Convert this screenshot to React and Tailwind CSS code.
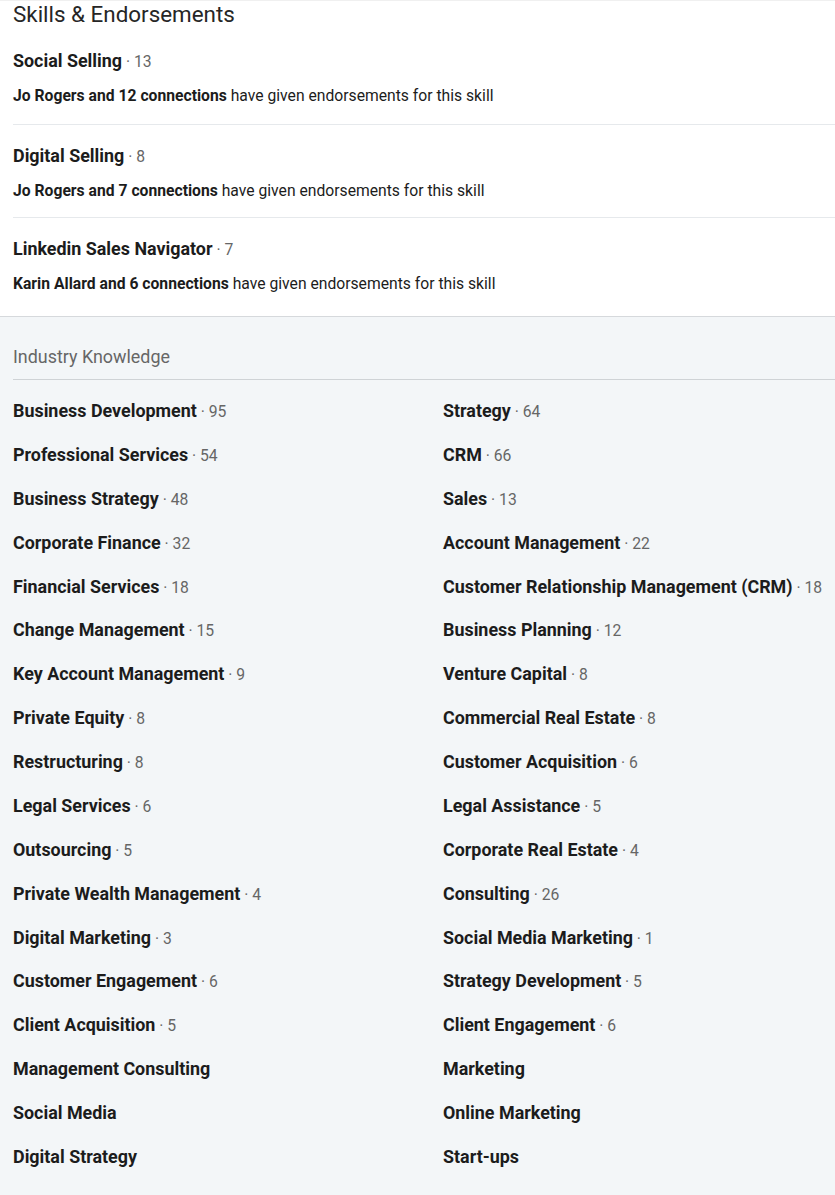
const featured = [
  { name: "Social Selling", count: 13, by: "Jo Rogers and 12 connections" },
  { name: "Digital Selling", count: 8, by: "Jo Rogers and 7 connections" },
  { name: "Linkedin Sales Navigator", count: 7, by: "Karin Allard and 6 connections" },
];

const industry = [
  ["Business Development", 95],
  ["Strategy", 64],
  ["Professional Services", 54],
  ["CRM", 66],
  ["Business Strategy", 48],
  ["Sales", 13],
  ["Corporate Finance", 32],
  ["Account Management", 22],
  ["Financial Services", 18],
  ["Customer Relationship Management (CRM)", 18],
  ["Change Management", 15],
  ["Business Planning", 12],
  ["Key Account Management", 9],
  ["Venture Capital", 8],
  ["Private Equity", 8],
  ["Commercial Real Estate", 8],
  ["Restructuring", 8],
  ["Customer Acquisition", 6],
  ["Legal Services", 6],
  ["Legal Assistance", 5],
  ["Outsourcing", 5],
  ["Corporate Real Estate", 4],
  ["Private Wealth Management", 4],
  ["Consulting", 26],
  ["Digital Marketing", 3],
  ["Social Media Marketing", 1],
  ["Customer Engagement", 6],
  ["Strategy Development", 5],
  ["Client Acquisition", 5],
  ["Client Engagement", 6],
  ["Management Consulting"],
  ["Marketing"],
  ["Social Media"],
  ["Online Marketing"],
  ["Digital Strategy"],
  ["Start-ups"],
];

const Count = ({ n }) =>
  n == null ? null : (
    <span className="text-[15.7px] font-normal text-[#666666]"> · {n}</span>
  );

export default function App() {
  return (
    <div className="min-h-[1195px] bg-[#f3f6f8] font-['Roboto',sans-serif] text-[#1c1c1c]">
      <div className="bg-white border-t border-[#f0f0f0] pl-[13px] border-b border-b-[#d6d9dc]">
        <h2 className="text-[22.4px] leading-[27px] font-normal text-[#262626]">
          Skills &amp; Endorsements
        </h2>
        <div className="mt-[21px]">
          {featured.map((s, i) => (
            <div
              key={s.name}
              className={
                i === 0
                  ? "pb-[18px] border-b border-[#e6e9ec]"
                  : i === 1
                  ? "pt-[19px] pb-[16px] border-b border-[#e6e9ec]"
                  : "pt-[19px] pb-[22px]"
              }
            >
              <div className="text-[17.9px] leading-6 font-bold">
                {s.name}
                <Count n={s.count} />
              </div>
              <p className="mt-[12px] text-[15.7px] leading-5">
                <span className="font-bold">{s.by}</span> have given endorsements for this skill
              </p>
            </div>
          ))}
        </div>
      </div>

      <div className="pl-[13px] pt-[28px]">
        <h3 className="text-[17.9px] leading-6 font-normal text-[#666666] pb-[10px] border-b border-[#cfd3d6]">
          Industry Knowledge
        </h3>
        <div className="grid grid-cols-[430px_1fr] pt-[19px]">
          {industry.map(([name, n]) => (
            <div key={name} className="h-[43.88px] text-[17.9px] leading-6 font-bold whitespace-nowrap">
              {name}
              <Count n={n} />
            </div>
          ))}
        </div>
      </div>
    </div>
  );
}
